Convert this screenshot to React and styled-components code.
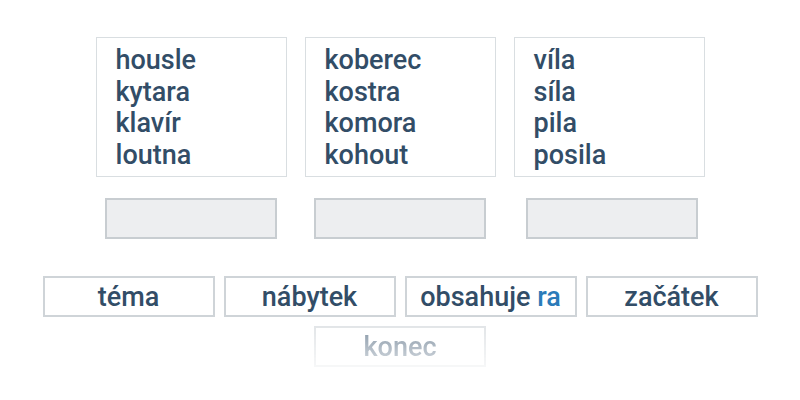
import React from "react";
import styled, { createGlobalStyle } from "styled-components";

const Global = createGlobalStyle`
  html, body { margin: 0; padding: 0; background: #ffffff; }
  body { font-family: Roboto, "Noto Sans", "Liberation Sans", sans-serif; }
`;

const Page = styled.div`
  width: 800px;
  height: 400px;
  padding-top: 37px;
  box-sizing: border-box;
  display: flex;
  flex-direction: column;
  align-items: center;
`;

const CardRow = styled.div`
  display: grid;
  grid-template-columns: repeat(3, 191px);
  column-gap: 18px;
`;

const Card = styled.div`
  box-sizing: border-box;
  height: 140px;
  border: 1px solid #d9dee1;
  padding: 7px 19px 5px;
  display: flex;
  flex-direction: column;
`;

const Word = styled.div`
  font-size: 27px;
  font-weight: 500;
  line-height: 31.7px;
  color: #324d67;
`;

const DropRow = styled.div`
  display: grid;
  grid-template-columns: repeat(3, 191px);
  column-gap: 18px;
  margin-top: 21px;
  justify-items: center;
`;

const DropZone = styled.div`
  box-sizing: border-box;
  width: 172px;
  height: 41px;
  background: #edeef0;
  border: 2px solid #c8cdd1;
  &:last-child {
    margin-left: 6px;
  }
`;

const TagRow = styled.div`
  display: flex;
  gap: 9px;
  margin-top: 37px;
`;

const Tag = styled.div`
  box-sizing: border-box;
  width: 172px;
  height: 41px;
  border: 2px solid #cfd4d8;
  display: flex;
  align-items: center;
  justify-content: center;
  font-size: 27px;
  font-weight: 500;
  color: #324d67;
  background: #ffffff;
`;

const FadedTag = styled(Tag)`
  margin-top: 9px;
  opacity: 0.6;
  -webkit-mask-image: linear-gradient(to bottom, rgba(0,0,0,1), rgba(0,0,0,0.3));
  mask-image: linear-gradient(to bottom, rgba(0,0,0,1), rgba(0,0,0,0.3));
`;

const Hl = styled.span`
  color: #2b7bb9;
  margin-left: 0.25em;
`;

const cards = [
  ["housle", "kytara", "klavír", "loutna"],
  ["koberec", "kostra", "komora", "kohout"],
  ["víla", "síla", "pila", "posila"],
];

export default function App() {
  return (
    <>
      <Global />
      <Page>
        <CardRow>
          {cards.map((c, i) => (
            <Card key={i}>
              {c.map((w) => (
                <Word key={w}>{w}</Word>
              ))}
            </Card>
          ))}
        </CardRow>
        <DropRow>
          <DropZone />
          <DropZone />
          <DropZone />
        </DropRow>
        <TagRow>
          <Tag>téma</Tag>
          <Tag>nábytek</Tag>
          <Tag>
            obsahuje<Hl>ra</Hl>
          </Tag>
          <Tag>začátek</Tag>
        </TagRow>
        <FadedTag>konec</FadedTag>
      </Page>
    </>
  );
}
